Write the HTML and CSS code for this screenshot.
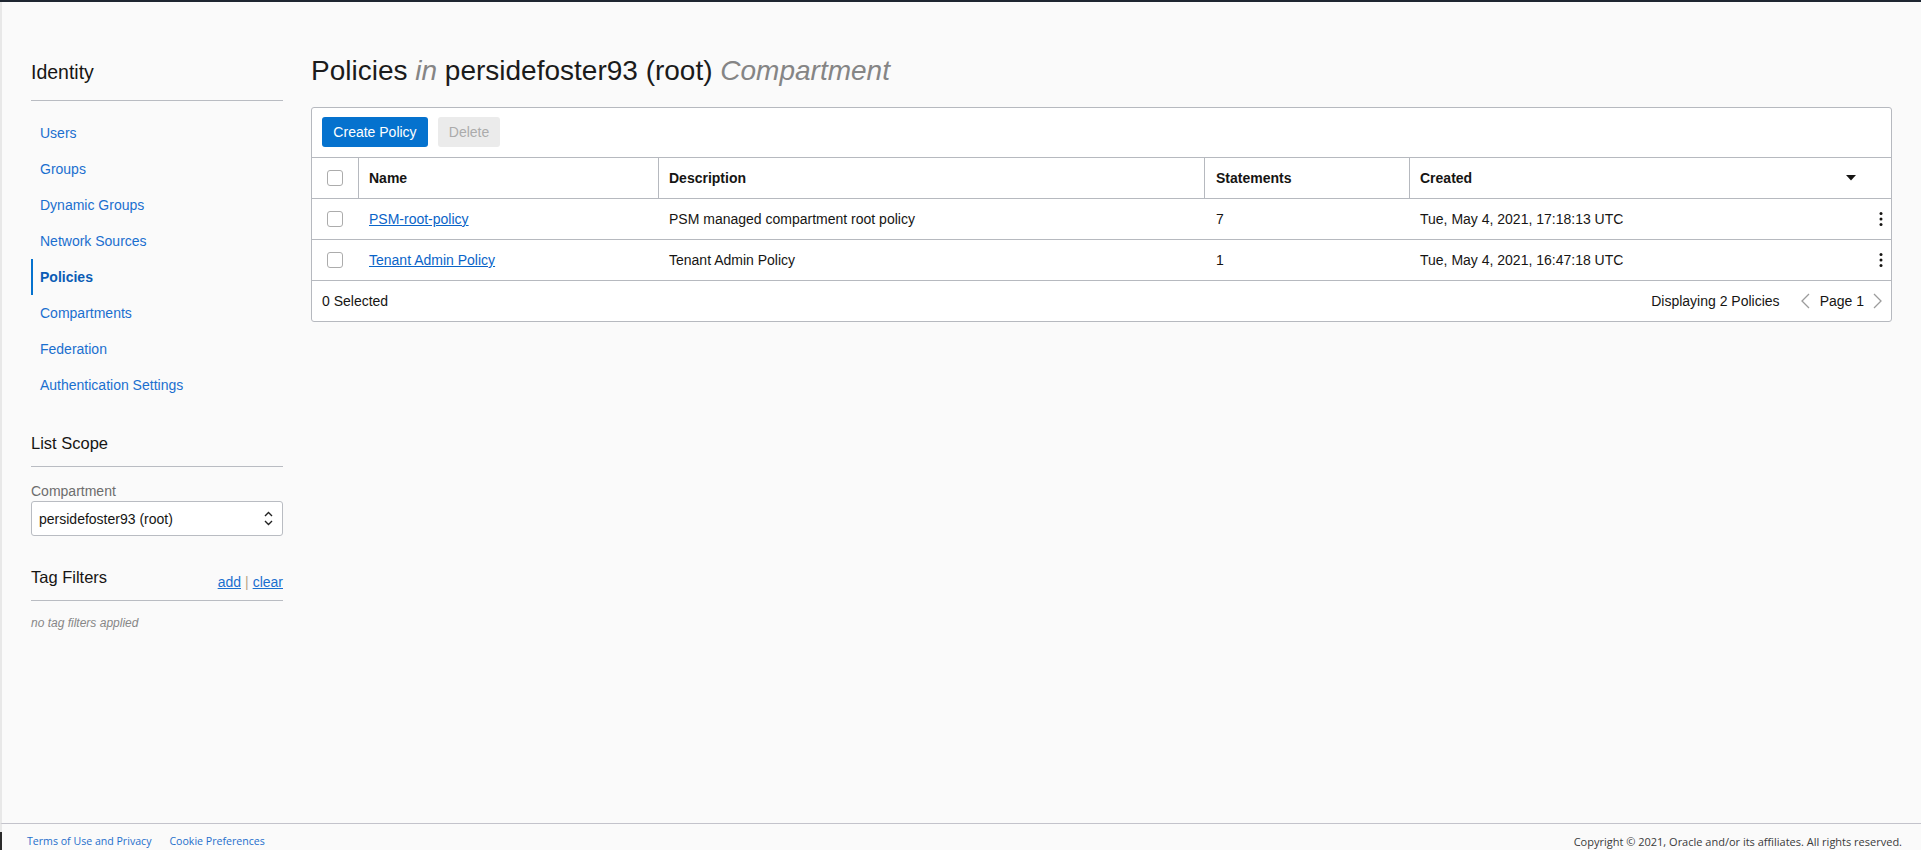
FILE: index.html
```html
<!DOCTYPE html>
<html lang="en">
<head>
<meta charset="utf-8">
<title>Policies</title>
<link rel="stylesheet" href="styles.css">
</head>
<body>
<div class="app">
  <div class="content">
    <aside class="sidebar">
      <h2 class="side-title">Identity</h2>
      <nav class="side-nav">
        <a class="nav-item" href="#">Users</a>
        <a class="nav-item" href="#">Groups</a>
        <a class="nav-item" href="#">Dynamic Groups</a>
        <a class="nav-item" href="#">Network Sources</a>
        <a class="nav-item active" href="#">Policies</a>
        <a class="nav-item" href="#">Compartments</a>
        <a class="nav-item" href="#">Federation</a>
        <a class="nav-item" href="#">Authentication Settings</a>
      </nav>
      <h3 class="section-title">List Scope</h3>
      <div class="field-label">Compartment</div>
      <div class="select">
        <span>persidefoster93 (root)</span>
        <svg class="select-icon" width="9" height="15" viewBox="0 0 9 15"><polyline points="1,5 4.5,1.5 8,5" fill="none" stroke="#222" stroke-width="1.4"/><polyline points="1,10 4.5,13.5 8,10" fill="none" stroke="#222" stroke-width="1.4"/></svg>
      </div>
      <div class="tag-head">
        <h3 class="tag-title">Tag Filters</h3>
        <span class="tag-links"><a href="#">add</a><span class="sep">|</span><a href="#">clear</a></span>
      </div>
      <div class="tag-empty">no tag filters applied</div>
    </aside>
    <main class="main">
      <h1 class="page-title">Policies <em>in</em> persidefoster93 (root) <em>Compartment</em></h1>
      <div class="card">
        <div class="toolbar">
          <button class="btn btn-primary">Create Policy</button>
          <button class="btn btn-disabled">Delete</button>
        </div>
        <div class="trow thead">
          <div class="cell c1"><span class="check"></span></div>
          <div class="cell c2">Name</div>
          <div class="cell c3">Description</div>
          <div class="cell c4">Statements</div>
          <div class="cell c5 split">Created<svg class="sort" width="10" height="6" viewBox="0 0 10 6"><polygon points="0,0 10,0 5,5.5" fill="#161513"/></svg></div>
        </div>
        <div class="trow">
          <div class="cell c1"><span class="check"></span></div>
          <div class="cell c2"><a href="#" class="link">PSM-root-policy</a></div>
          <div class="cell c3">PSM managed compartment root policy</div>
          <div class="cell c4">7</div>
          <div class="cell c5 split kebab-cell">Tue, May 4, 2021, 17:18:13 UTC<svg width="4" height="16" viewBox="0 0 4 16"><circle cx="2" cy="2.5" r="1.5" fill="#161513"/><circle cx="2" cy="8" r="1.5" fill="#161513"/><circle cx="2" cy="13.5" r="1.5" fill="#161513"/></svg></div>
        </div>
        <div class="trow">
          <div class="cell c1"><span class="check"></span></div>
          <div class="cell c2"><a href="#" class="link">Tenant Admin Policy</a></div>
          <div class="cell c3">Tenant Admin Policy</div>
          <div class="cell c4">1</div>
          <div class="cell c5 split kebab-cell">Tue, May 4, 2021, 16:47:18 UTC<svg width="4" height="16" viewBox="0 0 4 16"><circle cx="2" cy="2.5" r="1.5" fill="#161513"/><circle cx="2" cy="8" r="1.5" fill="#161513"/><circle cx="2" cy="13.5" r="1.5" fill="#161513"/></svg></div>
        </div>
        <div class="card-foot">
          <span>0 Selected</span>
          <div class="pager">
            <span class="displaying">Displaying 2 Policies</span>
            <svg class="chev" width="9" height="16" viewBox="0 0 9 16"><polyline points="8,1 1,8 8,15" fill="none" stroke="#9c9c9c" stroke-width="1.3"/></svg>
            <span class="page-num">Page 1</span>
            <svg class="chev" width="9" height="16" viewBox="0 0 9 16"><polyline points="1,1 8,8 1,15" fill="none" stroke="#9c9c9c" stroke-width="1.3"/></svg>
          </div>
        </div>
      </div>
    </main>
  </div>
  <footer class="footer">
    <div class="footer-bar">
      <div class="footer-links">
        <a href="#">Terms of Use and Privacy</a>
        <a href="#">Cookie Preferences</a>
      </div>
      <span class="copyright">Copyright © 2021, Oracle and/or its affiliates. All rights reserved.</span>
    </div>
  </footer>
</div>
</body>
</html>
```

FILE: styles.css
```css
* { box-sizing: border-box; }
html, body { margin: 0; padding: 0; background: #ffffff; }
body {
  font-family: "Liberation Sans", Arial, sans-serif;
  font-size: 14px;
  color: #161513;
}
a { text-decoration: none; }

.app {
  height: 850px;
  display: flex;
  flex-direction: column;
  background: #fafafa;
  border-top: 2px solid #1e2631;
}

.content {
  flex: 1;
  display: flex;
  border-left: 2px solid #e8e8e8;
  padding-left: 29px;
  padding-right: 29px;
}

/* Sidebar */
.sidebar {
  width: 252px;
  flex: none;
  padding-top: 58px;
}
.side-title {
  margin: 0;
  font-size: 19.5px;
  font-weight: normal;
  line-height: 24px;
  padding-bottom: 16px;
  border-bottom: 1px solid #b9bcc2;
}
.side-nav {
  display: flex;
  flex-direction: column;
  margin-top: 14px;
}
.nav-item {
  display: block;
  height: 36px;
  line-height: 36px;
  padding-left: 9px;
  color: #1a6fcf;
  font-size: 14px;
}
.nav-item.active {
  font-weight: bold;
  color: #0b5cb5;
  border-left: 2px solid #0572ce;
  padding-left: 7px;
}
.section-title {
  margin: 30px 0 0;
  font-size: 16.5px;
  font-weight: normal;
  line-height: 20px;
  padding-bottom: 13px;
  border-bottom: 1px solid #b9bcc2;
}
.field-label {
  margin-top: 16px;
  line-height: 16px;
  color: #6d6d6d;
}
.select {
  margin-top: 2px;
  height: 35px;
  border: 1px solid #b9bcc2;
  border-radius: 3px;
  background: #ffffff;
  display: flex;
  align-items: center;
  justify-content: space-between;
  padding: 0 9px 0 7px;
  color: #161513;
}
.tag-head {
  margin-top: 31px;
  display: flex;
  justify-content: space-between;
  align-items: flex-end;
  padding-bottom: 13px;
  border-bottom: 1px solid #b9bcc2;
}
.tag-title {
  margin: 0;
  font-size: 16.5px;
  font-weight: normal;
  line-height: 20px;
}
.tag-links {
  line-height: 16px;
  margin-bottom: -3px;
}
.tag-links a { color: #1a6fcf; text-decoration: underline; }
.tag-links .sep { color: #b8a586; margin: 0 4px; }
.tag-empty {
  margin-top: 15px;
  font-size: 12px;
  line-height: 14px;
  font-style: italic;
  color: #878787;
}

/* Main */
.main {
  flex: 1;
  margin-left: 28px;
  padding-top: 53px;
}
.page-title {
  margin: 0 0 20px;
  font-size: 28px;
  font-weight: normal;
  line-height: 32px;
  color: #1b1b1b;
}
.page-title em { color: #858585; }

.card {
  background: #ffffff;
  border: 1px solid #b6b9bf;
  border-radius: 3px;
}
.toolbar {
  display: flex;
  gap: 10px;
  padding: 9px 10px 10px;
  border-bottom: 1px solid #b6b9bf;
}
.btn {
  height: 30px;
  border: none;
  border-radius: 3px;
  font-family: "Liberation Sans", Arial, sans-serif;
  font-size: 14px;
  padding: 0;
}
.btn-primary {
  width: 106px;
  background: #0572ce;
  color: #ffffff;
}
.btn-disabled {
  width: 62px;
  background: #ebebeb;
  color: #ababab;
}

.trow {
  display: grid;
  grid-template-columns: 46px 300px 546px 205px 1fr;
  height: 41px;
  border-bottom: 1px solid #b6b9bf;
}
.cell {
  display: flex;
  align-items: center;
  min-width: 0;
  white-space: nowrap;
}
.thead .cell { font-weight: bold; }
.thead .c2, .thead .c3, .thead .c4, .thead .c5 { border-left: 1px solid #b6b9bf; }
.c1 { justify-content: center; }
.c2, .c3 { padding-left: 11px; }
.c4 { padding-left: 12px; }
.c5 { padding-left: 11px; }
.thead .c2, .thead .c3, .thead .c5 { padding-left: 10px; }
.thead .c4 { padding-left: 11px; }
.split { justify-content: space-between; }
.thead .split { padding-right: 35px; }
.kebab-cell { padding-right: 8px; }

.check {
  width: 16px;
  height: 16px;
  border: 1px solid #acacac;
  border-radius: 3px;
  background: #ffffff;
}
.link { color: #0a64c8; text-decoration: underline; }

.card-foot {
  height: 40px;
  display: flex;
  align-items: center;
  justify-content: space-between;
  padding: 0 9px 0 10px;
}
.pager {
  display: flex;
  align-items: center;
}
.displaying { margin-right: 21px; }
.page-num { margin: 0 9px 0 10px; }

/* Footer */
.footer {
  height: 27px;
  border-top: 1px solid #c3c3cb;
  border-left: 2px solid #e8e8e8;
  font-family: "Open Sans", "Noto Sans", sans-serif;
  font-size: 11px;
}
.footer-bar {
  margin-top: 8px;
  margin-left: -2px;
  height: 18px;
  border-left: 2px solid #2a2a2a;
  display: flex;
  align-items: center;
  justify-content: space-between;
  padding: 0 19px 0 25px;
}
.footer-links { display: flex; gap: 18px; font-size: 10.6px; }
.footer-links a { color: #1f6fcc; }
.copyright { color: #3a3a3a; }
```
